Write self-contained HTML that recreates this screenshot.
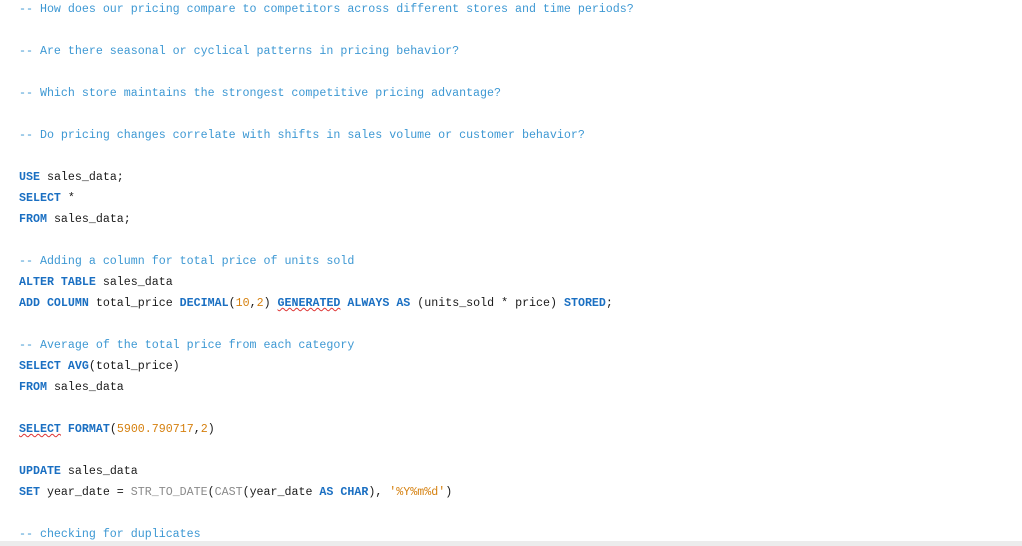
<!DOCTYPE html>
<html><head><style>
html,body{margin:0;padding:0;background:#fff;width:1022px;height:546px;overflow:hidden;position:relative}
pre{margin:0;position:absolute;left:19px;top:-1px;font-family:"Liberation Mono",monospace;font-size:11.65px;line-height:21px;color:#1a1a1a}
.c{color:#3d98d3}.k{color:#1a6fc2;font-weight:bold}.n{color:#d5800f}.f{color:#8a8a8a}.s{color:#d5800f}
.w{text-decoration:underline wavy #d33;text-decoration-thickness:1px}
.bar{position:absolute;left:0;top:541px;width:1022px;height:5px;background:#ececec}
</style></head><body>
<pre><span class="c">-- How does our pricing compare to competitors across different stores and time periods?</span>

<span class="c">-- Are there seasonal or cyclical patterns in pricing behavior?</span>

<span class="c">-- Which store maintains the strongest competitive pricing advantage?</span>

<span class="c">-- Do pricing changes correlate with shifts in sales volume or customer behavior?</span>

<span class="k">USE</span> sales_data;
<span class="k">SELECT</span> *
<span class="k">FROM</span> sales_data;

<span class="c">-- Adding a column for total price of units sold</span>
<span class="k">ALTER TABLE</span> sales_data
<span class="k">ADD COLUMN</span> total_price <span class="k">DECIMAL</span>(<span class="n">10</span>,<span class="n">2</span>) <span class="k w">GENERATED</span> <span class="k">ALWAYS AS</span> (units_sold * price) <span class="k">STORED</span>;

<span class="c">-- Average of the total price from each category</span>
<span class="k">SELECT AVG</span>(total_price)
<span class="k">FROM</span> sales_data

<span class="k w">SELECT</span> <span class="k">FORMAT</span>(<span class="n">5900.790717</span>,<span class="n">2</span>)

<span class="k">UPDATE</span> sales_data
<span class="k">SET</span> year_date = <span class="f">STR_TO_DATE</span>(<span class="f">CAST</span>(year_date <span class="k">AS CHAR</span>), <span class="s">'%Y%m%d'</span>)

<span class="c">-- checking for duplicates</span></pre>
<div class="bar"></div>
</body></html>
